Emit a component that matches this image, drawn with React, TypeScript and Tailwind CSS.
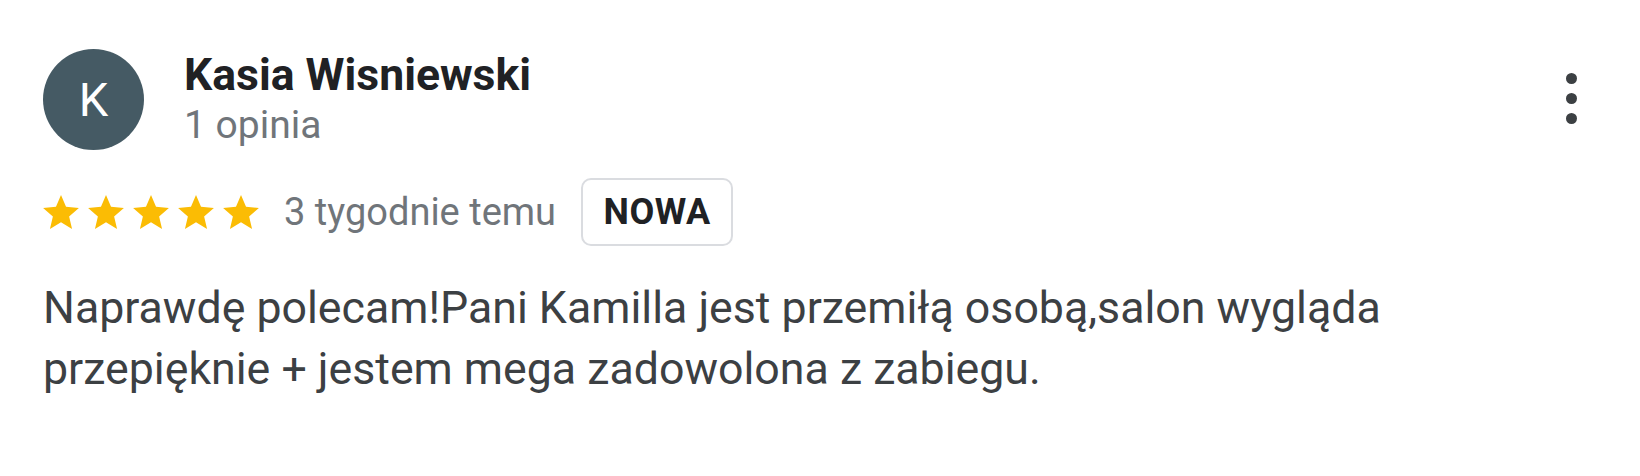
function StarIcon() {
  return (
    <svg width="36" height="34" viewBox="2 2 20 19" className="fill-[#fbbc04]">
      <path d="M12 17.27L18.18 21l-1.64-7.03L22 9.24l-7.19-.61L12 2 9.19 8.63 2 9.24l5.46 4.73L5.82 21z" />
    </svg>
  );
}

export default function App() {
  return (
    <div className="w-[1640px] h-[476px] bg-white overflow-hidden font-['Roboto',sans-serif]">
      <div className="pl-[43px] pr-[63px] pt-[49px]">
        {/* Header */}
        <div className="flex items-start">
          <div className="w-[101px] h-[101px] rounded-full bg-[#455a64] flex items-center justify-center text-white text-[47px] font-normal leading-none">
            K
          </div>
          <div className="ml-[40px] flex flex-col">
            <span className="text-[44.5px] font-bold text-[#202124] leading-[52px]">Kasia Wisniewski</span>
            <span className="text-[39px] text-[#70757a] leading-[48px]">1 opinia</span>
          </div>
          <button className="ml-auto mt-[24px] flex flex-col items-center gap-[9px]">
            <span className="w-[11px] h-[11px] rounded-full bg-[#3c4043]" />
            <span className="w-[11px] h-[11px] rounded-full bg-[#3c4043]" />
            <span className="w-[11px] h-[11px] rounded-full bg-[#3c4043]" />
          </button>
        </div>

        {/* Rating row */}
        <div className="flex items-center mt-[28px] h-[68px]">
          <div className="flex gap-[9px]">
            {[1, 2, 3, 4, 5].map((s) => (
              <StarIcon key={s} />
            ))}
          </div>
          <span className="ml-[25px] text-[38px] text-[#70757a]">3 tygodnie temu</span>
          <span className="ml-[25px] h-[68px] w-[152px] flex items-center justify-center border-2 border-[#dadce0] rounded-[10px] text-[36px] font-bold text-[#202124] tracking-[0.5px]">
            NOWA
          </span>
        </div>

        {/* Body */}
        <p className="mt-[32px] text-[44.7px] leading-[61px] text-[#3c4043] max-w-[1420px]">
          Naprawdę polecam!Pani Kamilla jest przemiłą osobą,salon wygląda przepięknie + jestem mega zadowolona z zabiegu.
        </p>
      </div>
    </div>
  );
}
